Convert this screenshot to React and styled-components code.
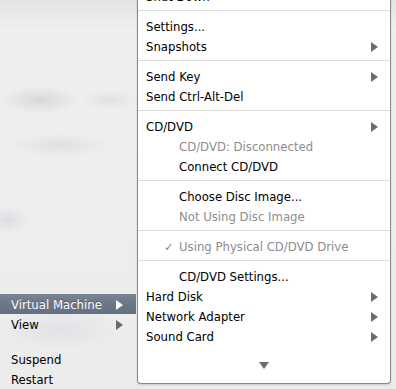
import React from "react";
import styled, { createGlobalStyle } from "styled-components";

const GlobalStyle = createGlobalStyle`
  html, body {
    margin: 0;
    padding: 0;
  }
  body {
    font-family: "Lucida Grande", "DejaVu Sans", sans-serif;
    font-size: 11.7px;
    -webkit-font-smoothing: antialiased;
  }
`;

const Screen = styled.div`
  display: flex;
  width: 396px;
  height: 389px;
  overflow: hidden;
  background-color: #ebebeb;
  background-image:
    radial-gradient(ellipse 40px 14px at 40px 100px, rgba(195, 195, 195, 0.5), transparent),
    radial-gradient(ellipse 30px 10px at 110px 100px, rgba(205, 205, 205, 0.4), transparent),
    radial-gradient(ellipse 50px 12px at 60px 145px, rgba(205, 212, 218, 0.5), transparent),
    radial-gradient(ellipse 20px 14px at 8px 220px, rgba(205, 210, 216, 0.6), transparent),
    radial-gradient(ellipse 60px 20px at 60px 330px, rgba(212, 216, 222, 0.5), transparent),
    linear-gradient(180deg, #e4e4e4 0px, #efefef 30px, #ececec 389px);
`;

const LeftMenu = styled.div`
  width: 137px;
  flex-shrink: 0;
  display: flex;
  flex-direction: column;
  padding-top: 294px;
`;

const LeftItem = styled.div`
  display: flex;
  align-items: center;
  justify-content: space-between;
  box-sizing: border-box;
  height: 20px;
  padding: 2px 13px 0 11px;
  margin-right: 1px;
  color: ${(p) => (p.$active ? "#fff" : "#000")};
  background: ${(p) =>
    p.$active ? "linear-gradient(180deg, #7a8494 0%, #6b7686 50%, #657080 100%)" : "transparent"};
  text-shadow: ${(p) => (p.$active ? "0 -1px 0 rgba(0,0,0,0.25)" : "none")};
`;

const LeftGap = styled.div`
  height: 16px;
`;

const SubMenu = styled.div`
  width: 254px;
  flex-shrink: 0;
  align-self: flex-start;
  margin-top: -14px;
  height: 398px;
  box-sizing: border-box;
  background: #fff;
  border: 1px solid #8a8a8a;
  border-top: none;
  border-radius: 0 0 4px 4px;
  box-shadow: 0 1px 2px rgba(0, 0, 0, 0.15);
  display: flex;
  flex-direction: column;
`;

const Item = styled.div`
  display: flex;
  align-items: center;
  justify-content: space-between;
  box-sizing: border-box;
  height: 20px;
  flex-shrink: 0;
  padding: 2px 12px 0 ${(p) => (p.$indent ? 41 : 8)}px;
  color: ${(p) => (p.$disabled ? "#8d8d8d" : "#000")};
  position: relative;
`;

const Check = styled.span`
  position: absolute;
  left: 26px;
  color: #8d8d8d;
`;

const Separator = styled.div`
  height: 10px;
  flex-shrink: 0;
  display: flex;
  align-items: center;
  &::after {
    content: "";
    flex: 1;
    height: 1px;
    margin-top: -1px;
    background: #dcdcdc;
  }
`;

const ScrollDown = styled.div`
  flex: 1;
  display: flex;
  justify-content: center;
  padding-top: 16px;
`;

const Arrow = ({ color = "#6b6b6b" }) => (
  <svg width="7" height="10" viewBox="0 0 7 10">
    <polygon points="0,0 7,5 0,10" fill={color} />
  </svg>
);

const DownArrow = () => (
  <svg width="10" height="7" viewBox="0 0 10 7">
    <polygon points="0,0 10,0 5,7" fill="#6b6b6b" />
  </svg>
);

const sections = [
  [{ label: "Shut Down" }],
  [{ label: "Settings..." }, { label: "Snapshots", sub: true }],
  [{ label: "Send Key", sub: true }, { label: "Send Ctrl-Alt-Del" }],
  [
    { label: "CD/DVD", sub: true },
    { label: "CD/DVD: Disconnected", indent: true, disabled: true },
    { label: "Connect CD/DVD", indent: true },
  ],
  [
    { label: "Choose Disc Image...", indent: true },
    { label: "Not Using Disc Image", indent: true, disabled: true },
  ],
  [{ label: "Using Physical CD/DVD Drive", indent: true, disabled: true, checked: true }],
  [
    { label: "CD/DVD Settings...", indent: true },
    { label: "Hard Disk", sub: true },
    { label: "Network Adapter", sub: true },
    { label: "Sound Card", sub: true },
  ],
];

export default function App() {
  return (
    <>
      <GlobalStyle />
      <Screen>
        <LeftMenu>
          <LeftItem $active>
            Virtual Machine
            <Arrow color="#fff" />
          </LeftItem>
          <LeftItem>
            View
            <Arrow />
          </LeftItem>
          <LeftGap />
          <LeftItem>Suspend</LeftItem>
          <LeftItem>Restart</LeftItem>
        </LeftMenu>
        <SubMenu>
          {sections.map((items, i) => (
            <React.Fragment key={i}>
              {i > 0 && <Separator />}
              {items.map((it) => (
                <Item key={it.label} $indent={it.indent} $disabled={it.disabled}>
                  {it.checked && <Check>✓</Check>}
                  <span>{it.label}</span>
                  {it.sub && <Arrow />}
                </Item>
              ))}
            </React.Fragment>
          ))}
          <ScrollDown>
            <DownArrow />
          </ScrollDown>
        </SubMenu>
      </Screen>
    </>
  );
}
